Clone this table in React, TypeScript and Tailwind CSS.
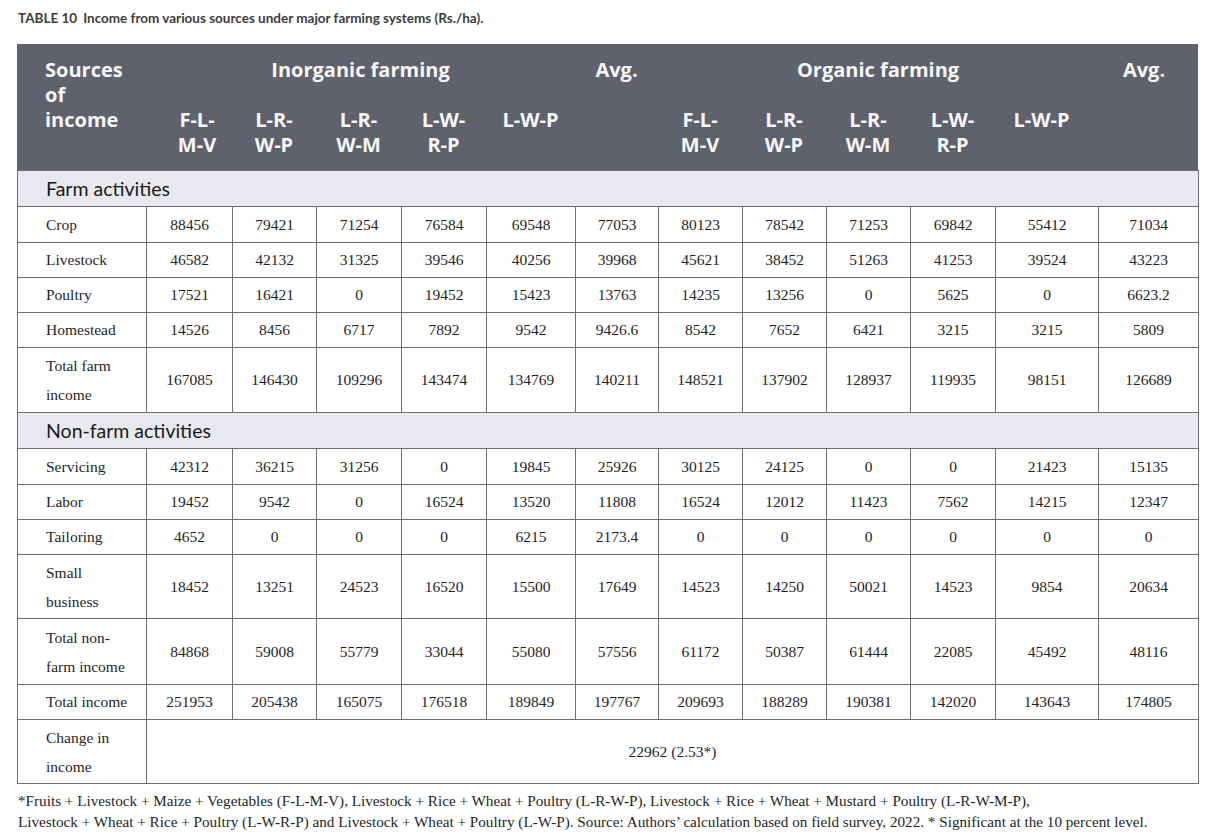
import React from "react";

const cols = [129, 86, 84, 85, 85, 89, 83, 84, 84, 84, 85, 103, 100];

type Row = { label: React.ReactNode; vals: string[]; tall?: boolean; h: string };

const farm: Row[] = [
  { label: "Crop", h: "h-[36px]", vals: ["88456", "79421", "71254", "76584", "69548", "77053", "80123", "78542", "71253", "69842", "55412", "71034"] },
  { label: "Livestock", h: "h-[35px]", vals: ["46582", "42132", "31325", "39546", "40256", "39968", "45621", "38452", "51263", "41253", "39524", "43223"] },
  { label: "Poultry", h: "h-[35px]", vals: ["17521", "16421", "0", "19452", "15423", "13763", "14235", "13256", "0", "5625", "0", "6623.2"] },
  { label: "Homestead", h: "h-[35px]", vals: ["14526", "8456", "6717", "7892", "9542", "9426.6", "8542", "7652", "6421", "3215", "3215", "5809"] },
  { label: <>Total farm<br />income</>, tall: true, h: "h-[65px]", vals: ["167085", "146430", "109296", "143474", "134769", "140211", "148521", "137902", "128937", "119935", "98151", "126689"] },
];

const nonFarm: Row[] = [
  { label: "Servicing", h: "h-[36px]", vals: ["42312", "36215", "31256", "0", "19845", "25926", "30125", "24125", "0", "0", "21423", "15135"] },
  { label: "Labor", h: "h-[35px]", vals: ["19452", "9542", "0", "16524", "13520", "11808", "16524", "12012", "11423", "7562", "14215", "12347"] },
  { label: "Tailoring", h: "h-[35px]", vals: ["4652", "0", "0", "0", "6215", "2173.4", "0", "0", "0", "0", "0", "0"] },
  { label: <>Small<br />business</>, tall: true, h: "h-[64px]", vals: ["18452", "13251", "24523", "16520", "15500", "17649", "14523", "14250", "50021", "14523", "9854", "20634"] },
  { label: <>Total non-<br />farm income</>, tall: true, h: "h-[66px]", vals: ["84868", "59008", "55779", "33044", "55080", "57556", "61172", "50387", "61444", "22085", "45492", "48116"] },
  { label: "Total income", h: "h-[35px]", vals: ["251953", "205438", "165075", "176518", "189849", "197767", "209693", "188289", "190381", "142020", "143643", "174805"] },
];

const subs = [
  <>F-L-<br />M-V</>,
  <>L-R-<br />W-P</>,
  <>L-R-<br />W-M</>,
  <>L-W-<br />R-P</>,
  <>L-W-P</>,
];

const lato = "font-['Lato','Noto_Sans',sans-serif]";
const open = "font-['Open_Sans','Noto_Sans',sans-serif]";
const serif = "font-['Liberation_Serif','Times_New_Roman',serif]";

function DataRow({ r }: { r: Row }) {
  return (
    <tr className={r.h}>
      <td className={`border border-[#6f6f6f] pl-[28px] pr-1 align-middle ${r.tall ? "leading-[29px]" : "leading-[20px]"}`}>{r.label}</td>
      {r.vals.map((v, i) => (
        <td key={i} className="border border-[#6f6f6f] text-center align-middle">
          {v}
        </td>
      ))}
    </tr>
  );
}

function Band({ text }: { text: string }) {
  return (
    <tr className="h-[36px]">
      <td colSpan={13} className={`border border-[#6f6f6f] bg-[#e8e9ee] pl-[28px] ${lato} text-[19.5px] text-[#1a1a1a] align-middle`}>
        {text}
      </td>
    </tr>
  );
}

export default function App() {
  return (
    <div className="w-[1215px] h-[838px] bg-white overflow-hidden pl-[17px]">
      <div className={`${lato} pt-[10px] text-[13.5px] font-bold text-[#3d3d3d] leading-[17px] pl-[1px]`}>
        TABLE 10<span className="ml-[6px]">Income from various sources under major farming systems (Rs./ha).</span>
      </div>

      <div className="w-[1181px] mt-[17px]">
        <div
          className={`grid bg-[#5f626c] text-[#f7f7f7] ${open} font-bold text-[20px] leading-[25px] pt-[13px] pb-[13px] grid-rows-[50px_50px]`}
          style={{ gridTemplateColumns: cols.map((c) => `${c}px`).join(" ") }}
        >
          <div className="row-span-2 pl-[28px]">
            Sources<br />of<br />income
          </div>
          <div className="col-span-5 text-center">Inorganic farming</div>
          <div className="text-center">Avg.</div>
          <div className="col-span-5 text-center">Organic farming</div>
          <div className="text-center pr-[8px]">Avg.</div>
          {subs.map((s, i) => (
            <div key={"a" + i} className={`text-center ${i === 0 ? "pl-[16px]" : ""}`}>
              {s}
            </div>
          ))}
          <div />
          {subs.map((s, i) => (
            <div key={"b" + i} className={`text-center ${i === 4 ? "pr-[10px]" : ""}`}>
              {s}
            </div>
          ))}
          <div />
        </div>

        <table className={`w-[1181px] table-fixed border-collapse ${serif} text-[15.5px] text-[#1f1f1f]`}>
          <colgroup>
            {cols.map((c, i) => (
              <col key={i} style={{ width: c }} />
            ))}
          </colgroup>
          <tbody>
            <Band text="Farm activities" />
            {farm.map((r, i) => (
              <DataRow key={i} r={r} />
            ))}
            <Band text="Non-farm activities" />
            {nonFarm.map((r, i) => (
              <DataRow key={i} r={r} />
            ))}
            <tr className="h-[64px]">
              <td className="border border-[#6f6f6f] pl-[28px] leading-[29px] align-middle">
                Change in<br />income
              </td>
              <td colSpan={12} className="border border-[#6f6f6f] text-center align-middle">
                22962 (2.53*)
              </td>
            </tr>
          </tbody>
        </table>
      </div>

      <div className={`${serif} text-[15.2px] leading-[21px] text-[#1f1f1f] mt-[6px] pl-[1px] whitespace-nowrap`}>
        *Fruits + Livestock + Maize + Vegetables (F-L-M-V), Livestock + Rice + Wheat + Poultry (L-R-W-P), Livestock + Rice + Wheat + Mustard + Poultry (L-R-W-M-P),
        <br />
        Livestock + Wheat + Rice + Poultry (L-W-R-P) and Livestock + Wheat + Poultry (L-W-P). Source: Authors’ calculation based on field survey, 2022. * Significant at the 10 percent level.
      </div>
    </div>
  );
}
